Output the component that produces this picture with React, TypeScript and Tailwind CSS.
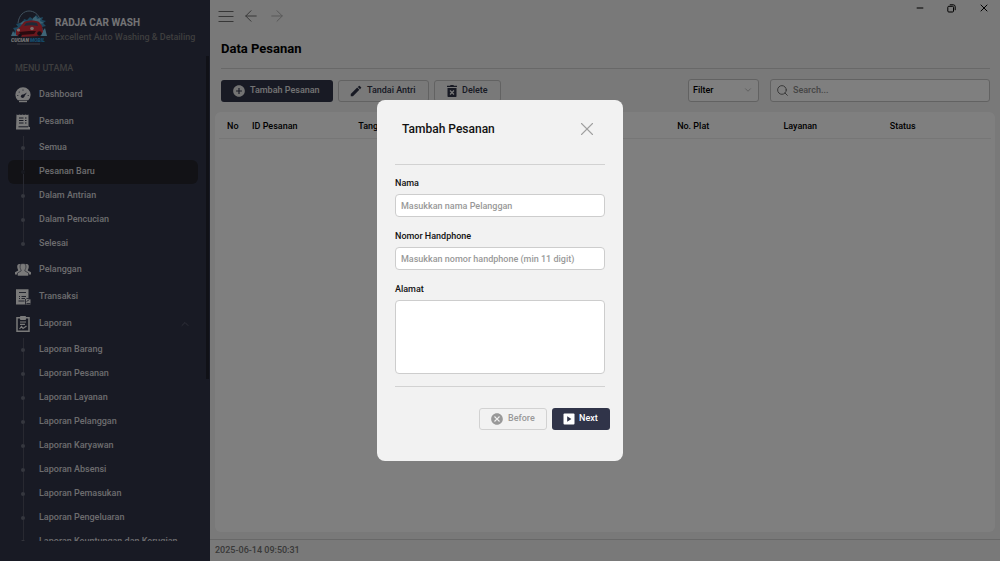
import { useState } from 'react';
import { MdAddCircle, MdCancel, MdEdit } from 'react-icons/md';
import { ArrowLeft, ArrowRight, ChevronDown, ChevronUp, Minus, Search, X } from 'lucide-react';

type IconProps = { className?: string };

const pesananItems = ['Semua', 'Pesanan Baru', 'Dalam Antrian', 'Dalam Pencucian', 'Selesai'];
const laporanItems = [
  'Laporan Barang',
  'Laporan Pesanan',
  'Laporan Layanan',
  'Laporan Pelanggan',
  'Laporan Karyawan',
  'Laporan Absensi',
  'Laporan Pemasukan',
  'Laporan Pengeluaran',
  'Laporan Keuntungan dan Kerugian',
];
const columns = ['ID Pesanan', 'Tanggal', '', '', 'No. Plat', 'Layanan', 'Status'];

const Logo = () => (
  <svg viewBox="0 0 36 36" className="size-9 shrink-0" aria-hidden="true">
    <path d="M7 13C8 5 13 1 18 1s9 3 11 8" fill="none" stroke="#7f9fb8" strokeWidth="1" />
    <path d="M12 12l1-3 3 1 3-3 3 2 3-4 3 3 4-1-1 3 4 1-3 2 3 3-4 1 2 4-4 0-2 5-18-1-8 1 3-5-2-3 5-1-2-3z" fill="#3a8fbd" />
    <path d="M22 8l3-2 1 3 4-1-1 3 4 2-5 1-3-2-4 1zM9 14l3-3 3 1-2 3z" fill="#7cc4e4" />
    <path d="M0 26l2-5 2 3 2-5 3 7zM29 26l1-7 2 2 2-3 2 8z" fill="#7cc9ec" />
    <path d="M5 20l4-3 4-5c5-2 11-2 15 0l3 4 1 6-3 4-20 1-4-2z" fill="#d6303c" />
    <path d="M13 16l2-3c4-1 8-1 11 0l1 3c-5-1-9-1-14 0z" fill="#3d5570" />
    <path d="M8 22l10-1 7 0-2 3-13 1z" fill="#52141e" />
    <circle cx="7.500" cy="20" r="1.600" fill="#f6dede" />
    <circle cx="21" cy="18.500" r="1.800" fill="#f6dede" />
    <circle cx="9" cy="25.500" r="1.700" fill="#202333" />
    <circle cx="28.500" cy="23.500" r="2.300" fill="#202333" />
    <g fontFamily="Roboto, sans-serif" fontSize="5" fontWeight="900" fontStyle="italic">
      <text x="0" y="32" fill="#f2f2f2">CUCIAN</text>
      <text x="19" y="32" fill="#2ba3e2">MOBIL</text>
    </g>
    <path d="M6 34h23" stroke="#9a9aa5" strokeWidth=".7" />
  </svg>
);

const DashboardIcon = ({ className }: IconProps) => (
  <svg viewBox="0 0 16 16" className={className} aria-hidden="true">
    <path d="M2.800 13.300A7.600 7.600 0 1 1 13.200 13.300z" fill="currentColor" />
    <path d="M4 14.500h8" stroke="currentColor" strokeWidth="1.400" />
    <g fill="#303449">
      <circle cx="7.600" cy="9.300" r="1.700" />
      <path d="M7.500 8l4.500-2.500L8.800 10z" />
      <circle cx="8" cy="3" r=".6" />
      <circle cx="4.200" cy="5" r=".6" />
      <circle cx="2.800" cy="8.500" r=".6" />
      <circle cx="13.200" cy="8.500" r=".6" />
    </g>
  </svg>
);

const OrderIcon = ({ className }: IconProps) => (
  <svg viewBox="0 0 16 16" className={className} aria-hidden="true">
    <path d="M1.500 .5l1.500 .5 1.500-.5 1.500 .5 1.500-.5 1.500 .5 1.500-.5 1.500 .5 1.500-.5V13h1.500v2.500H1z" fill="currentColor" />
    <path d="M4 4h4.500M4 6.500h4.500M4 9h4.500M10 4h1.500M10 6.500h1.500M10 9h1.500M3.500 12.800h9.500" stroke="#303449" strokeWidth="1" />
  </svg>
);

const PeopleIcon = ({ className }: IconProps) => (
  <svg viewBox="0 0 16 16" className={className} aria-hidden="true">
    <g fill="currentColor">
      <path d="M4.500 2C2.500 2 2 3.500 2.300 5.500c.2 1.400.9 2 .9 3L0 10.200V12.500h4l4-3V3z" />
      <path d="M11.500 2c2 0 2.500 1.500 2.200 3.500-.2 1.400-.9 2-.9 3l3.200 1.700V12.500h-4l-4-3V3z" />
      <path d="M8 1.500c-2.400 0-3.200 1.700-2.900 3.900.2 1.700 1.100 2.300 1.100 3.500L2.500 11v3h11V11L9.800 8.900c0-1.200.9-1.800 1.100-3.500.3-2.200-.5-3.900-2.900-3.900z" stroke="#303449" strokeWidth=".6" />
    </g>
  </svg>
);

const TransactionIcon = ({ className }: IconProps) => (
  <svg viewBox="0 0 16 16" className={className} aria-hidden="true">
    <path d="M1 .3h12.500V9l2 1.500v5H1z" fill="currentColor" />
    <path d="M4 3.500h7M4 7.500h1M6.500 7.500H11M4 9.500h1M6.500 9.500H10M3.500 12h6" stroke="#303449" strokeWidth=".9" />
    <path d="M11.500 9.500h4M11.500 12.500l3-2M11.500 14.500h4M10.500 10v5.500" stroke="#303449" strokeWidth=".8" />
  </svg>
);

const ReportIcon = ({ className }: IconProps) => (
  <svg viewBox="0 0 16 16" className={className} fill="none" stroke="currentColor" aria-hidden="true">
    <path d="M5 1.800H2v13.400h12V1.800H11" strokeWidth="1.500" />
    <path d="M5.500 .5h5v3h-5z" fill="currentColor" />
    <path d="M5 6h6M5 8.300h5M4.500 13l2-2.500 1.500 2 3.500-2.500" strokeWidth="1.200" />
  </svg>
);

const RestoreIcon = ({ className }: IconProps) => (
  <svg viewBox="0 0 9 9" className={className} fill="none" stroke="currentColor" aria-hidden="true">
    <rect x=".8" y="2.300" width="5.700" height="5.700" rx="1" />
    <path d="M2.800.8h3.400a2 2 0 0 1 2 2v3.400" />
  </svg>
);

const NextIcon = ({ className }: IconProps) => (
  <svg viewBox="0 0 12 12" className={className} aria-hidden="true">
    <rect x=".5" y=".5" width="11" height="11" rx="1" fill="currentColor" />
    <path d="M4.200 3.200v5.600L8.400 6z" fill="#303449" />
  </svg>
);

const DeleteIcon = ({ className }: IconProps) => (
  <svg viewBox="0 0 12 12" className={className} aria-hidden="true">
    <path d="M1 .8h3l.6-.8h2.800l.6 .8h3v1.200H1zM1.500 3h9v8.200a.8.8 0 0 1-.8.8H2.300a.8.8 0 0 1-.8-.8z" fill="currentColor" />
    <path d="M4 5.500l4 4M8 5.500l-4 4" stroke="#f2f2f2" strokeWidth="1.200" />
  </svg>
);

type MenuItemProps = { label: string; icon: React.ReactNode; open?: boolean };

const MenuItem = ({ label, icon, open }: MenuItemProps) => (
  <a href="#" className="flex h-[27px] items-center gap-2 pr-[19px] pl-[15px]">
    <span className="text-[#f4f4f4]">{icon}</span>
    <span className="flex-1">{label}</span>
    {open && <ChevronUp className="size-3 text-[#6b6e7c]" strokeWidth={1.5} />}
  </a>
);

const SubMenu = ({ items, active }: { items: string[]; active?: string }) => (
  <ul className="mt-px">
    {items.map((item, i) => (
      <li key={item}>
        <a
          href="#"
          className={`mr-3 ml-2 flex h-6 items-center gap-3 rounded-md pl-[13px] ${item === active ? 'bg-[#24252d]' : ''}`}
        >
          <span className="flex w-1 flex-col items-center self-stretch">
            <span className="w-px flex-1 bg-[#505363]" />
            <span className={`size-1 rounded-full ${item === active ? 'bg-[#303340]' : 'bg-[#6b6e7c]'}`} />
            <span className={`w-px flex-1 ${i < items.length - 1 ? 'bg-[#505363]' : ''}`} />
          </span>
          <span className="ml-0.5 whitespace-nowrap">{item}</span>
        </a>
      </li>
    ))}
  </ul>
);

const Sidebar = () => (
  <aside className="flex w-[210px] shrink-0 flex-col bg-[#303449] pb-5 text-[#d8d8dc]">
    <div className="flex h-14 items-center gap-2 pl-[11px]">
      <Logo />
      <div className="pt-1 whitespace-nowrap">
        <p className="text-[10px] leading-[14px] font-bold text-[#e6e6ea]">RADJA CAR WASH</p>
        <p className="leading-[14px] text-[#7c7c7c]">Excellent Auto Washing &amp; Detailing</p>
      </div>
    </div>
    <div className="flex min-h-0 flex-1">
      <nav className="flex-1 overflow-hidden">
        <p className="flex h-[25px] items-center pl-[15px] text-[#7c7c7c]">MENU UTAMA</p>
        <MenuItem label="Dashboard" icon={<DashboardIcon className="size-4" />} />
        <MenuItem label="Pesanan" icon={<OrderIcon className="size-4" />} />
        <SubMenu items={pesananItems} active="Pesanan Baru" />
        <MenuItem label="Pelanggan" icon={<PeopleIcon className="size-4" />} />
        <MenuItem label="Transaksi" icon={<TransactionIcon className="size-4" />} />
        <MenuItem label="Laporan" icon={<ReportIcon className="size-4" />} open />
        <SubMenu items={laporanItems} />
      </nav>
      <div className="mr-px -ml-1 h-2/3 w-[3px] bg-[#20222e]" />
    </div>
  </aside>
);

const TitleBar = () => (
  <header className="flex h-8 items-start justify-between pr-[10px] pl-2 text-[#6e6e6e]">
    <div className="flex h-8 items-center gap-2">
      <button type="button" aria-label="Menu">
        <svg viewBox="0 0 16 12" className="h-3 w-4" stroke="currentColor" aria-hidden="true">
          <path d="M.5 1.500h15M.5 6.500h15M.5 11.500h15" />
        </svg>
      </button>
      <button type="button" aria-label="Kembali">
        <ArrowLeft className="size-[18px]" strokeWidth={1.3} />
      </button>
      <button type="button" aria-label="Maju">
        <ArrowRight className="size-[18px] text-[#b0b0b0]" strokeWidth={1.3} />
      </button>
    </div>
    <div className="flex h-4 items-center gap-[22px] text-black">
      <button type="button" aria-label="Minimize">
        <Minus className="size-[10px]" strokeWidth={2.4} />
      </button>
      <button type="button" aria-label="Restore">
        <RestoreIcon className="size-[9px]" />
      </button>
      <button type="button" aria-label="Close">
        <X className="size-3" strokeWidth={2} />
      </button>
    </div>
  </header>
);

const Toolbar = () => (
  <div className="flex items-center gap-[5px]">
    <button type="button" className="flex h-[22px] items-center gap-1 rounded-[3px] bg-[#303449] pr-[10px] pl-[11px] text-[#e6e6e6]">
      <MdAddCircle className="size-[14px]" />
      <span className="min-w-[73px] text-left">Tambah Pesanan</span>
    </button>
    <button type="button" className="flex h-[22px] items-center gap-1 rounded-[3px] border border-[#c4c4c4] pr-[10px] pl-[10px] text-[#303449]">
      <MdEdit className="size-[14px]" />
      <span className="min-w-[51px] text-left">Tandai Antri</span>
    </button>
    <button type="button" className="flex h-[22px] items-center gap-1 rounded-[3px] border border-[#c4c4c4] pr-[10px] pl-[11px] text-[#303449]">
      <DeleteIcon className="size-3" />
      <span className="min-w-7 text-left">Delete</span>
    </button>
    <div className="relative ml-auto">
      <select aria-label="Filter" className="h-[23px] w-[71px] appearance-none rounded-[3px] border border-[#c4c4c4] bg-white pl-1 text-black">
        <option>Filter</option>
      </select>
      <ChevronDown className="pointer-events-none absolute top-1.5 right-1.5 size-[10px] text-[#999]" strokeWidth={1.5} />
    </div>
    <label className="ml-1.5 flex h-[23px] w-[220px] items-center gap-1 rounded-[3px] border border-[#c4c4c4] bg-white px-[5px]">
      <Search className="size-[13px] text-[#6e6e6e]" strokeWidth={1.8} />
      <input type="search" aria-label="Search" placeholder="Search..." className="min-w-0 flex-1 placeholder:text-[#8c8c8c]" />
    </label>
  </div>
);

const OrderTable = () => (
  <div className="mt-[10px] min-h-0 flex-1 rounded-md bg-white px-1">
    <table className="w-full table-fixed text-left text-black">
      <thead>
        <tr className="h-[26px] border-b border-[#ececec]">
          <th className="w-7 pt-[3px] pl-2 font-medium">No</th>
          {columns.map((col, i) => (
            <th key={i} className="pt-[3px] pl-[5px] font-medium">{col}</th>
          ))}
        </tr>
      </thead>
      <tbody />
    </table>
  </div>
);

type FieldProps = { id: string; label: string; children: React.ReactNode };

const Field = ({ id, label, children }: FieldProps) => (
  <div className="flex flex-col gap-1">
    <label htmlFor={id} className="h-[14px] leading-[14px] text-[#111]">{label}</label>
    {children}
  </div>
);

const OrderDialog = () => {
  const [nama, setNama] = useState('');
  const [phone, setPhone] = useState('');
  const [alamat, setAlamat] = useState('');

  return (
    <form role="dialog" aria-label="Tambah Pesanan" className="w-[246px] rounded-lg bg-[#f2f2f2] px-[18px] pt-[17px] pb-[31px]">
      <div className="flex h-6 items-center justify-between px-[7px]">
        <h2 className="text-[12px] font-medium text-[#111]">Tambah Pesanan</h2>
        <button type="button" aria-label="Tutup" className="text-[#a0a0a0]">
          <X className="size-[22px]" strokeWidth={1.2} />
        </button>
      </div>
      <div className="mt-[23px] flex flex-col gap-3 border-y border-[#d2d2d2] pt-[11px] pb-3">
        <Field id="nama" label="Nama">
          <input
            id="nama"
            value={nama}
            onChange={(e) => setNama(e.target.value)}
            placeholder="Masukkan nama Pelanggan"
            className="h-[23px] rounded border border-[#cdcdcd] bg-white px-[5px] placeholder:text-[#999]"
          />
        </Field>
        <Field id="phone" label="Nomor Handphone">
          <input
            id="phone"
            value={phone}
            onChange={(e) => setPhone(e.target.value)}
            placeholder="Masukkan nomor handphone (min 11 digit)"
            className="h-[23px] rounded border border-[#cdcdcd] bg-white px-[5px] placeholder:text-[#999]"
          />
        </Field>
        <Field id="alamat" label="Alamat">
          <textarea
            id="alamat"
            value={alamat}
            onChange={(e) => setAlamat(e.target.value)}
            className="h-[74px] resize-none rounded border border-[#cdcdcd] bg-white px-[5px]"
          />
        </Field>
      </div>
      <div className="mt-[21px] -mr-[5px] flex justify-end gap-[5px]">
        <button type="button" className="flex h-[22px] w-[68px] items-center gap-1 rounded-[3px] border border-[#d2d2d2] pl-[10px] text-[#999]">
          <MdCancel className="size-[14px]" />
          Before
        </button>
        <button type="button" className="flex h-[22px] w-[58px] items-center gap-1 rounded-[3px] bg-[#303449] pl-[11px] text-white">
          <NextIcon className="size-3" />
          Next
        </button>
      </div>
    </form>
  );
};

export default function App() {
  return (
    <div className="flex h-screen bg-white pb-px font-[Roboto,sans-serif] text-[9px] font-medium">
      <Sidebar />
      <div className="flex min-w-0 flex-1 flex-col bg-[#f2f2f2]">
        <TitleBar />
        <main className="flex min-h-0 flex-1 flex-col px-[5px] pb-[7px]">
          <div className="pr-[5px] pl-[6px]">
            <h1 className="flex h-[37px] items-center border-b border-[#d0d0d0] pb-0.5 text-[13px] font-bold text-black">Data Pesanan</h1>
            <div className="pt-[10px]">
              <Toolbar />
            </div>
          </div>
          <OrderTable />
        </main>
        <footer className="flex h-[22px] items-center border-t border-[#d0d0d0] pl-[5px] text-[#737373]">
          2025-06-14 09:50:31
        </footer>
      </div>
      <div className="fixed inset-0 bottom-px flex items-center justify-center bg-black/50">
        <OrderDialog />
      </div>
    </div>
  );
}
